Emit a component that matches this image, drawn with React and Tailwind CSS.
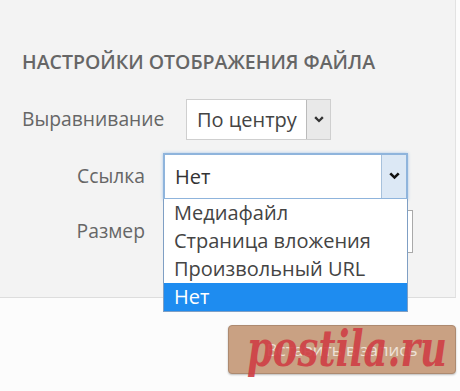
import React from "react";

const Chevron = ({ className = "" }) => (
  <svg viewBox="0 0 10 8" className={className} fill="currentColor">
    <path d="M0.3 2 L2 0.3 L5 3.4 L8 0.3 L9.7 2 L5 6.6 Z" />
  </svg>
);

const App = () => {
  return (
    <div
      className="w-[460px] h-[391px] overflow-hidden bg-[#fcfcfc] flex flex-col relative"
      style={{ fontFamily: '"Open Sans", "Noto Sans", sans-serif' }}
    >
      {/* Settings area */}
      <div className="h-[298px] shrink-0 bg-[#f3f3f3] border-b border-[#dddddd] border-r border-r-[#e2e2e2] w-[456px] relative">
        <h3 className="pl-[22px] pt-[48px] text-[19.5px] leading-[28px] font-semibold uppercase text-[#666666]">
          Настройки отображения файла
        </h3>

        {/* Alignment */}
        <div className="flex items-center mt-[23px] pl-[22px]">
          <span className="text-[19.3px] text-[#666666] w-[164px]">Выравнивание</span>
          <div className="flex h-[41px] border border-[#cfcfcf] bg-white">
            <span className="w-[119px] pl-[10px] flex items-center text-[20px] text-[#444444]">По центру</span>
            <span className="w-[24px] bg-[#e9e9e9] border-l border-[#bbbbbb] flex items-center justify-center text-[#333333]">
              <Chevron className="w-[10px] h-[8px]" />
            </span>
          </div>
        </div>

        {/* Link */}
        <div className="flex items-center mt-[13px]">
          <span className="w-[145px] text-right text-[19.3px] text-[#666666]">Ссылка</span>
          <div className="ml-[18px] flex h-[47px] w-[245px] border-[2px] border-[#8fb4dc] bg-white shadow-[0_0_3px_#a9c9ea]">
            <span className="flex-1 pl-[10px] flex items-center text-[20px] text-[#333333]">Нет</span>
            <span className="w-[25px] bg-[#dce8f5] border-l border-[#a7c1dc] flex items-center justify-center text-[#111111]">
              <Chevron className="w-[11px] h-[9px]" />
            </span>
          </div>
        </div>

        {/* Size */}
        <div className="flex items-center mt-[10px]">
          <span className="w-[145px] text-right text-[19.3px] text-[#666666]">Размер</span>
          <div className="ml-[18px] h-[43px] w-[250px] border border-[#a9a9a9] bg-white" />
        </div>

        {/* Open dropdown list */}
        <ul className="absolute left-[163px] top-[199px] w-[245px] bg-white border border-[#7f9fc4] border-t-0 text-[20px] text-[#444444] leading-[28px]">
          <li className="pl-[10px] h-[28px]">Медиафайл</li>
          <li className="pl-[10px] h-[28px]">Страница вложения</li>
          <li className="pl-[10px] h-[28px]">Произвольный URL</li>
          <li className="pl-[10px] h-[28px] bg-[#1e8cf0] text-white">Нет</li>
        </ul>
      </div>

      {/* Bottom button */}
      <div className="flex justify-end pr-[4px] pt-[27px]">
        <div className="relative">
          <button className="w-[228px] h-[49px] rounded-[4px] bg-[#c9a183] border border-[#ad8a70] shadow-[0_1px_2px_rgba(0,0,0,0.25)] text-[17px] text-[#eee2d8]">
            Вставить в запись
          </button>
          <span
            className="absolute left-[19px] top-[-6px] text-[50px] leading-[60px] font-bold italic text-[#cf3f45] opacity-90 pointer-events-none whitespace-nowrap origin-left scale-x-[0.74]"
            style={{ fontFamily: '"DejaVu Serif", serif' }}
          >
            postila.ru
          </span>
        </div>
      </div>
    </div>
  );
};

export default App;
